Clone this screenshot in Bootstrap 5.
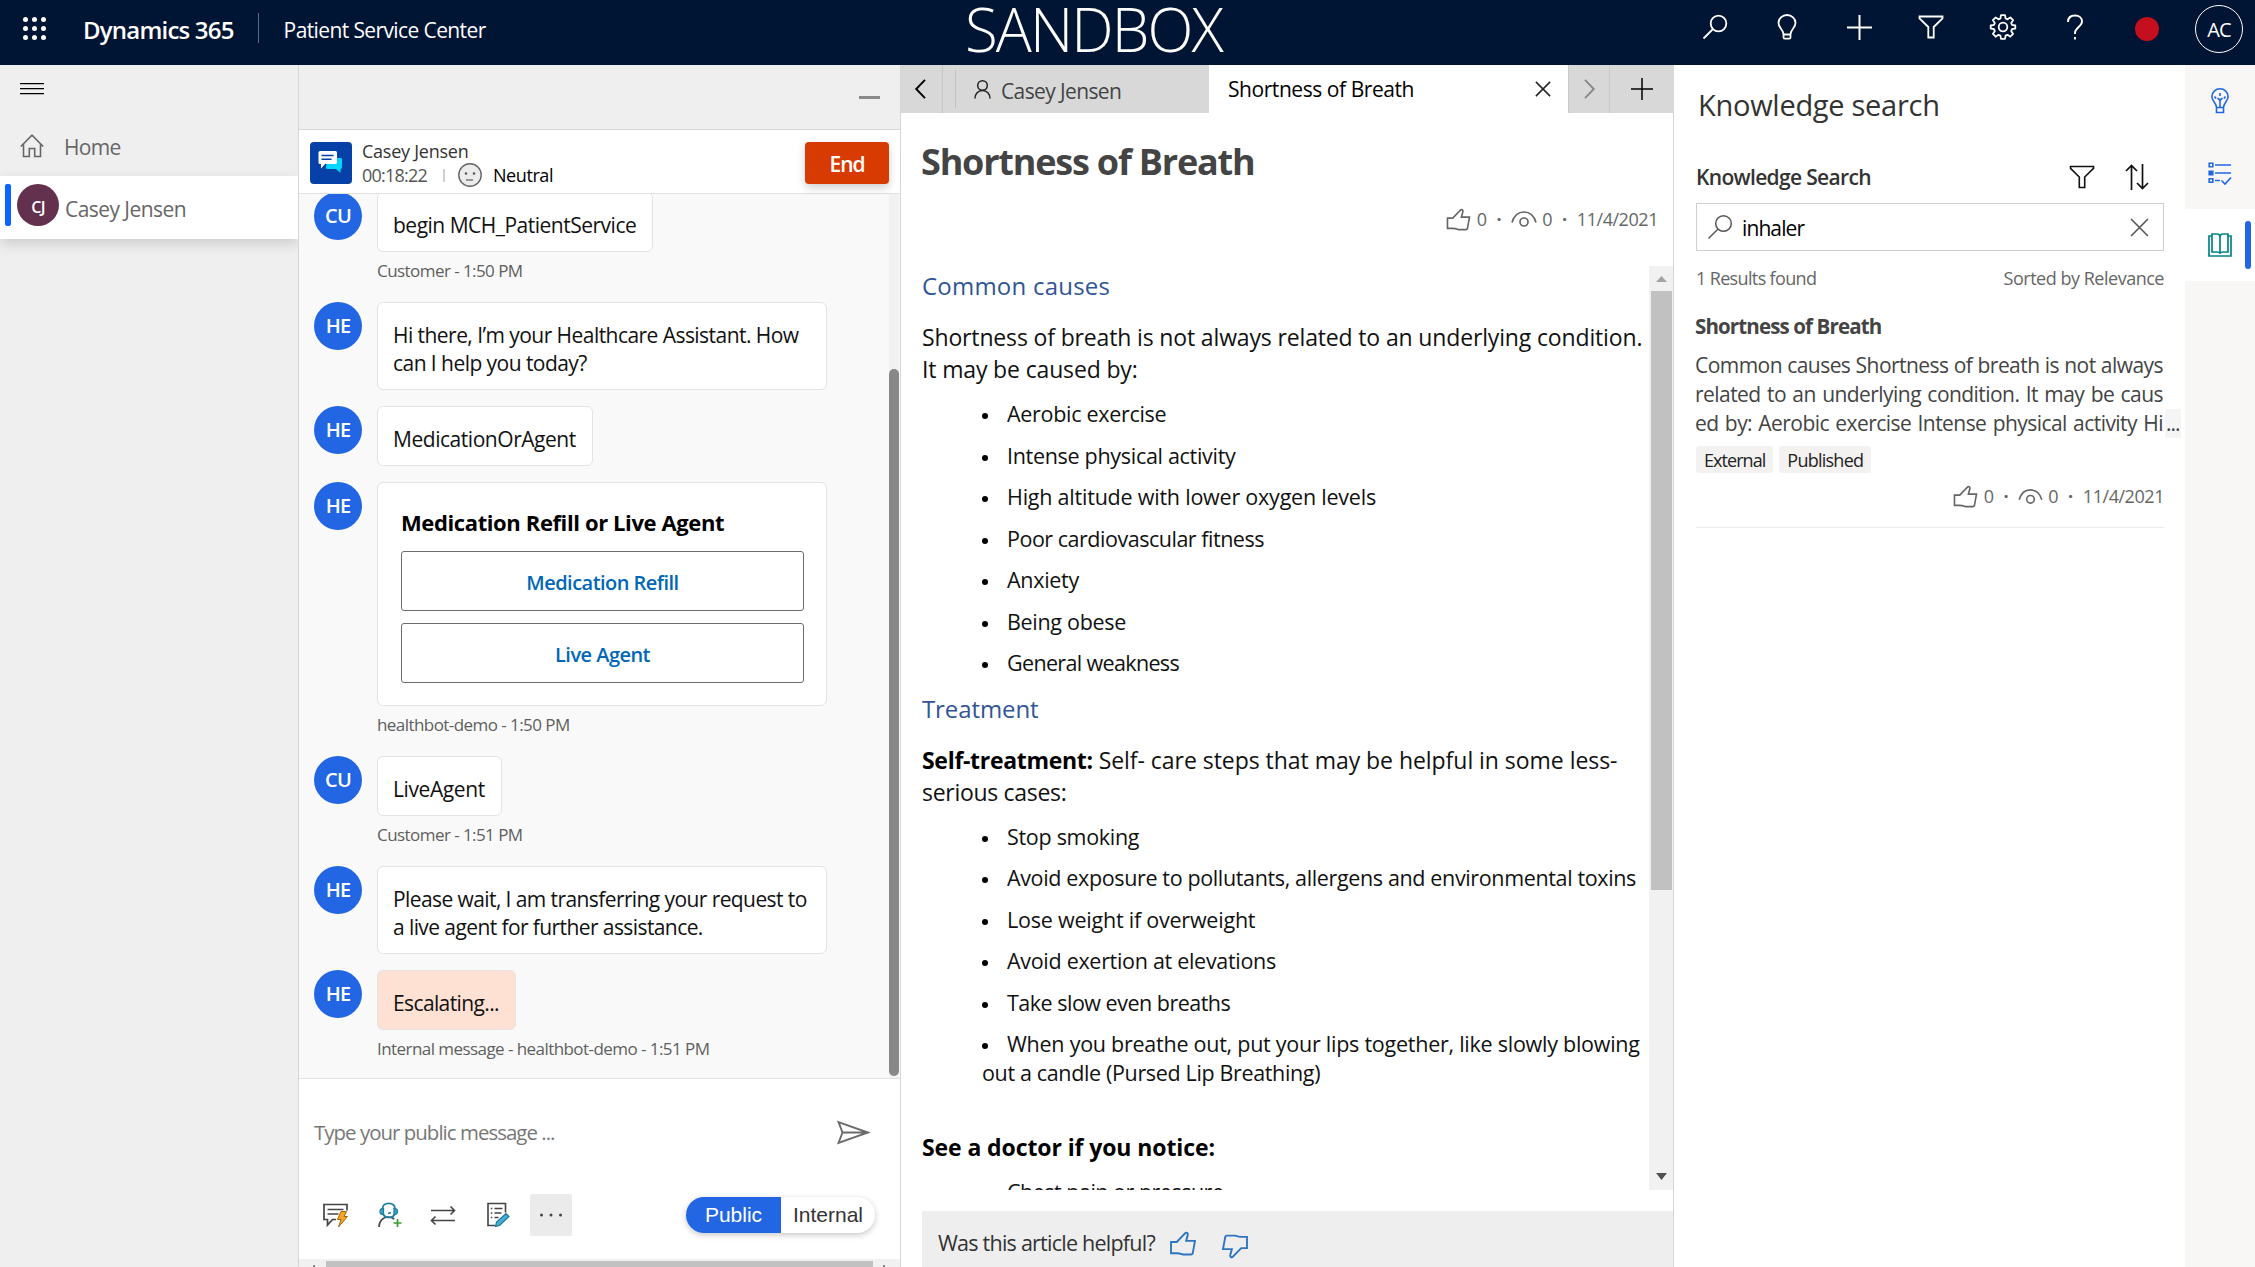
<!DOCTYPE html>
<html lang="en">
<head>
<meta charset="utf-8">
<title>Patient Service Center</title>
<link href="https://cdn.jsdelivr.net/npm/bootstrap@5.3.0/dist/css/bootstrap.min.css" rel="stylesheet">
<script src="https://cdn.jsdelivr.net/npm/bootstrap@5.3.0/dist/js/bootstrap.bundle.min.js"></script>
<style>
body{font-family:"Open Sans","Noto Sans",sans-serif;font-size:21px;line-height:28px;letter-spacing:-.55px;color:#111;width:2255px;height:1267px;overflow:hidden;background:#fff;white-space:nowrap}
svg{display:block;flex:none;fill:none;stroke:currentColor;overflow:visible}
/* top bar */
.topbar{height:65px;background:#001433;color:#fff;display:grid;grid-template-columns:965px 1fr 576px;line-height:60px}
.brand{font-size:24px;font-weight:600;letter-spacing:-.8px;margin-left:36px}
.brand-sep{width:1px;height:30px;background:#5b6982;margin:13px 0 0 24px}
.app-name{margin-left:25px;letter-spacing:-.61px}
.sandbox{font-size:60px;font-weight:300;letter-spacing:-1.9px;line-height:58px}
.tool{width:72px;height:54px}
.rec{width:24px;height:24px;background:#c50f1f;margin-top:4px}
.me{width:48px;height:48px;border:1.5px solid #fff;font-size:20px;line-height:48px;margin-top:4px;letter-spacing:-.8px}
/* left navigation */
.work{height:1202px}
.sidenav{width:298px;background:#efefef;color:#666}
.burger{padding:18px 0 0 20px;height:50px;color:#000}
.home-row{height:61px;padding:0 0 0 20px}
.session{height:63px;background:#fff;box-shadow:0 5px 12px rgba(0,0,0,.14);padding:8px 0 0 5px}
.session-bar{width:6px;height:42px;border-radius:2px;background:#0b66ff}
.session-av{width:42px;height:42px;background:#63304d;color:#fff;font-size:16px;font-weight:600;margin:0 6px 0 6px;padding-top:3px;letter-spacing:-.6px}
/* conversation */
.chat{width:602px;border-left:1px solid #d6d6d6;background:#fff}
.chat-band{height:65px;background:#efefef;border-bottom:1px solid #d6d6d6}
.mini{width:21px;height:3px;background:#8a8a8a;margin:31px 20px 0 0}
.chat-head{height:64px;border-bottom:1px solid #e1e1e1;padding:12px 11px 0 11px}
.chan{width:42px;height:42px;border-radius:4px;background:#0641a8}
.who{font-size:18px;line-height:24px;margin:-3px 0 0 10px;color:#333;letter-spacing:-.25px}
.timer{letter-spacing:-.78px;color:#555}
.end-btn{width:84px;height:42px;background:#d83b01;color:#fff;font-weight:600;border-radius:4px;letter-spacing:-1px;box-shadow:0 4px 9px rgba(0,0,0,.18);line-height:44px}
.stream{height:884px;background:#f9f9f9;overflow:hidden}
.msgs{width:590px;padding-left:15px;margin-top:-2px}
.msg{gap:15px;margin-bottom:16px}
.av{width:48px;height:48px;flex:none;background:#2266e3;color:#fff;font-weight:600;font-size:20px;letter-spacing:-.8px}
.bubble{background:#fff;border:1px solid #e3e3e3;border-radius:6px;padding:18px 16px 12px 15px;width:fit-content;line-height:28px}
.wide{width:450px}
.stamp{height:34px;line-height:37px;font-size:17px;color:#5f5f5f;letter-spacing:-.56px}
.med-card{padding:24px 22px 22px 23px}
.med-title{font-size:22px;font-weight:700;line-height:30px;margin-bottom:14px;letter-spacing:-.39px;color:#000}
.choice{height:60px;border:1px solid #6b6b6b;border-radius:3px;color:#0067b8;font-size:20px;font-weight:600;line-height:61px;letter-spacing:-.53px}
.vtrack{width:10px;background:#f1f1f1;margin-right:1px;padding-top:175px}
.vthumb{height:707px;background:#888;border-radius:5px}
.composer{height:189px;border-top:1px solid #e1e1e1}
.ph{color:#777;font-size:20.4px;letter-spacing:-.95px}
.tools{padding:0 25px 0 24px;height:42px;margin-top:48px}
.more{width:42px;height:42px;background:#ebebeb;border-radius:2px}
.toggle{font-family:"Liberation Sans",Arial,sans-serif;font-size:21px;letter-spacing:0;width:189px;height:36px;border-radius:18px;background:#fff;overflow:hidden;box-shadow:0 2px 6px rgba(0,0,0,.22);line-height:36px;color:#333}
.toggle-on{width:95px;background:#2266e3;color:#fff}
.hbar{height:8px;background:#f1f1f1}
.hthumb{height:6px;background:#c1c1c1;width:547px}
.tick{width:2px;height:2px;background:#8a8a8a}
/* article */
.article{width:774px;border-left:1px solid #d6d6d6;border-right:1px solid #d6d6d6}
.tabs{height:48px;background:#d8d8d8;margin-right:-1px;line-height:52px;letter-spacing:-.62px;color:#444}
.tab-back{width:42px;border-right:1px solid #c6c6c6}
.tab-div{width:1px;height:38px;background:#c0c0c0;margin:5px 0 0 12px}
.tab-on{width:359px;background:#fff;color:#000;padding:0 17px 0 19px;font-weight:500;letter-spacing:-.44px}
.tab-next{width:42px;border-right:1px solid #c9c9c9;border-left:1px solid #c9c9c9;color:#888}
.art-title{font-size:36px;font-weight:700;letter-spacing:-1.2px;color:#444;margin:24px 0 0 20px;line-height:50px}
.meta{font-size:18px;letter-spacing:-.45px;color:#666;line-height:24px}
.scroller{height:924px;overflow:hidden}
.doc{width:748px;padding:1px 0 0 21px;font-size:21.5px;line-height:29px;letter-spacing:-.3px;color:#111}
.doc h2{font-size:24px;line-height:38px;color:#2f5597;letter-spacing:.22px;margin:0;font-weight:400}
.doc p{font-size:23px;line-height:32px;margin:16px 0 14px;letter-spacing:-.15px}
.doc p b{color:#000;letter-spacing:-.3px}
.doc ul{list-style:none;margin:0 0 12px 60px;padding:0}
.doc li{margin-bottom:12.5px}
.dot{display:inline-block;width:25px}
.dot::before{content:"";display:block;width:6px;height:6px;border-radius:50%;background:#000;margin-bottom:3px}
.sb{width:24px;background:#f1f1f1}
.sb-thumb{width:21px;height:599px;background:#c1c1c1;margin:0 auto}
.helpful{height:56px;margin:21px 0 0 21px;background:#eee;padding:5px 0 0 16px;color:#333;letter-spacing:-.76px;font-size:21.5px}
/* knowledge panel */
.know{width:511px;padding:0 21px 0 22px;color:#333}
.know-title{font-size:29px;line-height:40px;letter-spacing:-.28px;margin:20px 0 0 2px}
.know-sub{font-weight:600;letter-spacing:-.67px;height:34px;margin-top:35px}
.search{height:48px;border:1px solid #cfcfcf;margin-top:9px;padding:0 14px 0 10px;color:#000;letter-spacing:-.9px}
.small-row{font-size:18px;line-height:24px;color:#666;margin-top:15px;letter-spacing:-.64px}
.res-title{font-size:20.5px;font-weight:700;color:#444;letter-spacing:-.87px;margin:22px 0 0 -1px}
.snip{line-height:29px;color:#444;margin:11px 0 0 -1px;height:86px}
.snip>div{width:468px;text-align:justify;text-align-last:justify}
.snip .over{width:484px;display:flex}
.over>span:first-child{width:468px;flex:none;text-align-last:justify}
.dots{background:#f5f5f5;margin-left:2px;padding:0 1px;letter-spacing:-1px}
.tagx{background:#f3f2f1;border-radius:3px;height:27px;font-size:18px;line-height:28px;padding:0 8px;color:#222}
.rule{height:1px;background:#ebebeb;margin-top:19px}
.rail{width:70px;background:#f8f7f6;color:#2266e3}
.rail-cell{height:72px}
.rail-on{background:#fff;color:#038387}
.rail-bar{width:6px;height:48px;border-radius:3px;background:#2266e3;top:12px;right:4px}
</style>
</head>
<body>
<svg width="0" height="0" class="position-absolute">
 <symbol id="mag" viewBox="0 0 26 26"><circle cx="16.5" cy="9.5" r="7.8"/><path d="M11 15 1.5 24.5"/></symbol>
 <symbol id="funnel" viewBox="0 0 26 26"><path d="M1.5 2.5h23v1.8L15.700 13v10.500h-5.400V13L1.500 4.300z"/></symbol>
 <symbol id="thumb" viewBox="0 0 26 24"><path d="M1.500 10.500H7L15.500 1.800c1.500-.6 2.500.6 2 2.400L16 9.500h8.500L22.300 21.500q-.4 1-1.500 1h-8q-3.500-1.200-6.300-1.200h-5z"/></symbol>
 <symbol id="eye" viewBox="0 0 26 18"><path d="M1 12.500C3 5.500 7.500 2 13 2s10 3.500 12 10.500"/><circle cx="13" cy="12" r="4"/></symbol>
 <symbol id="cross" viewBox="0 0 18 18"><path d="M1 1l16 16M17 1 1 17"/></symbol>
</svg>

<header class="topbar">
 <div class="d-flex">
  <svg width="24" height="24" viewBox="0 0 24 24" style="fill:#fff;stroke:none;margin:17px 0 0 23px"><g><circle cx="2.500" cy="2.500" r="2.500"/><circle cx="11.500" cy="2.500" r="2.500"/><circle cx="20.500" cy="2.500" r="2.500"/><circle cx="2.500" cy="11.500" r="2.500"/><circle cx="11.500" cy="11.500" r="2.500"/><circle cx="20.500" cy="11.500" r="2.500"/><circle cx="2.500" cy="20.500" r="2.500"/><circle cx="11.500" cy="20.500" r="2.500"/><circle cx="20.500" cy="20.500" r="2.500"/></g></svg>
  <div class="brand">Dynamics 365</div><div class="brand-sep"></div><div class="app-name">Patient Service Center</div>
 </div>
 <div class="sandbox">SANDBOX</div>
 <div class="d-flex">
  <div class="tool d-flex align-items-center justify-content-center"><svg width="26" height="26" stroke-width="1.800"><use href="#mag"/></svg></div>
  <div class="tool d-flex align-items-center justify-content-center"><svg width="20" height="26" viewBox="0 0 20 26" stroke-width="1.800"><path d="M6.500 20.500c0-5-5-6.500-5-11.500a8.500 8 0 0 1 17 0c0 5-5 6.500-5 11.500zM6.500 20.500v3q0 1.200 1.200 1.200h4.600q1.200 0 1.200-1.200v-3"/></svg></div>
  <div class="tool d-flex align-items-center justify-content-center"><svg width="25" height="25" viewBox="0 0 25 25" stroke-width="2"><path d="M12.500 0v25M0 12.500h25"/></svg></div>
  <div class="tool d-flex align-items-center justify-content-center"><svg width="26" height="26" stroke-width="1.800"><use href="#funnel"/></svg></div>
  <div class="tool d-flex align-items-center justify-content-center"><svg width="26" height="26" viewBox="0 0 26 26" stroke-width="1.800" stroke-linejoin="round"><circle cx="13" cy="13" r="4.300"/><path d="M11 1.200h4l.6 3.300 1.900.8 2.800-1.900 2.800 2.800-1.900 2.800.8 1.900 3.300.6v3l-3.300.7-.8 1.900 1.900 2.800-2.800 2.800-2.800-1.900-1.900.8-.6 3.300h-4l-.6-3.300-1.900-.8-2.800 1.900-2.800-2.800 1.900-2.800-.8-1.900-3.300-.7v-3l3.300-.6.8-1.900-1.900-2.800 2.800-2.800 2.800 1.900 1.900-.8z"/></svg></div>
  <div class="tool d-flex align-items-center justify-content-center"><svg width="16" height="26" viewBox="0 0 16 26" stroke-width="1.900"><path d="M1 8c0-4 2.700-6.500 7-6.500s7 2.500 7 6c0 5-7 6-7 11.500v1"/><path d="M8 23v2.500"/></svg></div>
  <div class="tool d-flex align-items-center justify-content-center"><div class="rec rounded-circle"></div></div>
  <div class="tool d-flex align-items-center justify-content-center"><div class="me rounded-circle text-center">AC</div></div>
 </div>
</header>

<main class="work d-flex">
 <nav class="sidenav">
  <div class="burger"><svg width="24" height="12" viewBox="0 0 24 12" stroke-width="1.200"><path d="M0 .6h24M0 5.600h24M0 10.600h24"/></svg></div>
  <div class="home-row d-flex align-items-center"><svg width="24" height="24" viewBox="0 0 24 24" stroke-width="1.600"><path d="M.8 12.500 12 1.200l11.200 11.300M3.500 10v12.500h5.800v-8h5.400v8h5.800V10"/></svg><span style="margin:2px 0 0 20px;letter-spacing:-.7px">Home</span></div>
  <div class="session d-flex"><div class="session-bar"></div><div class="session-av rounded-circle d-flex align-items-center justify-content-center">CJ</div><span style="margin-top:11px">Casey Jensen</span></div>
 </nav>

 <section class="chat">
  <div class="chat-band d-flex justify-content-end"><div class="mini"></div></div>
  <div class="chat-head d-flex">
   <div class="chan d-flex align-items-center justify-content-center"><svg width="26" height="24" viewBox="0 0 26 24" style="stroke:none"><path fill="#00d8ff" d="M9 7h13.500Q24 7 24 8.500v8q0 1.500-1.500 1.500v4L18 18H9.500Q8 18 8 16.500z"/><path fill="#fff" d="M2 0h15.500Q19 0 19 1.500v10q0 1.500-1.500 1.500H7l-4 4.500V13H2Q.5 13 .5 11.500v-10Q.5 0 2 0z"/><path stroke="#0641a8" stroke-width="1.500" d="M3.500 4.500h12M3.500 8.200h10"/></svg></div>
   <div class="who">Casey Jensen
    <div class="d-flex"><span class="timer">00:18:22</span><span style="width:2px;height:13px;background:#d0d0d0;margin:6px 13px 0 16px"></span><svg width="24" height="24" viewBox="0 0 24 24" color="#666" stroke-width="1.400"><circle cx="12" cy="12" r="11.200" fill="#ececec"/><path d="M8 17h7" stroke-width="1.300"/><circle cx="8" cy="10.500" r="1" fill="#555" stroke="#555" stroke-width=".6"/><circle cx="16" cy="10.500" r="1" fill="#555" stroke="#555" stroke-width=".6"/></svg><span style="margin-left:11px;color:#000;font-weight:500;letter-spacing:-.43px">Neutral</span></div>
   </div>
   <div class="end-btn ms-auto text-center">End</div>
  </div>
  <div class="stream d-flex">
   <div class="msgs">
    <div class="msg d-flex"><div class="av rounded-circle d-flex align-items-center justify-content-center">CU</div><div><div class="bubble" style="letter-spacing:-.5px">begin MCH_PatientService</div><div class="stamp">Customer - 1:50 PM</div></div></div>
    <div class="msg d-flex"><div class="av rounded-circle d-flex align-items-center justify-content-center">HE</div><div class="bubble wide">Hi there, I’m your Healthcare Assistant. How<br>can I help you today?</div></div>
    <div class="msg d-flex"><div class="av rounded-circle d-flex align-items-center justify-content-center">HE</div><div class="bubble" style="letter-spacing:-.46px">MedicationOrAgent</div></div>
    <div class="msg d-flex"><div class="av rounded-circle d-flex align-items-center justify-content-center">HE</div><div><div class="bubble wide med-card"><div class="med-title">Medication Refill or Live Agent</div><div class="choice text-center">Medication Refill</div><div class="choice text-center" style="margin-top:12px">Live Agent</div></div><div class="stamp">healthbot-demo - 1:50 PM</div></div></div>
    <div class="msg d-flex"><div class="av rounded-circle d-flex align-items-center justify-content-center">CU</div><div><div class="bubble" style="letter-spacing:-.4px">LiveAgent</div><div class="stamp">Customer - 1:51 PM</div></div></div>
    <div class="msg d-flex"><div class="av rounded-circle d-flex align-items-center justify-content-center">HE</div><div class="bubble wide" style="letter-spacing:-.59px">Please wait, I am transferring your request to<br>a live agent for further assistance.</div></div>
    <div class="msg d-flex"><div class="av rounded-circle d-flex align-items-center justify-content-center">HE</div><div><div class="bubble" style="background:#ffe1d4;letter-spacing:-.62px">Escalating...</div><div class="stamp">Internal message - healthbot-demo - 1:51 PM</div></div></div>
   </div>
   <div class="vtrack ms-auto"><div class="vthumb"></div></div>
  </div>
  <div class="composer">
   <div class="d-flex align-items-center justify-content-between" style="padding:0 30px 0 15px;height:28px;margin-top:39px"><span class="ph">Type your public message ...</span><svg width="33" height="23" viewBox="0 0 33 23" color="#6b6b6b" stroke-width="1.900"><path d="M1.500 1.200 31 11.500 1.500 21.800l4-10.300zM5.500 11.500H31"/></svg></div>
   <div class="tools d-flex align-items-center">
    <svg width="26" height="26" viewBox="0 0 26 26" color="#444" stroke-width="1.700"><path d="M13 17.500H9.500L4.500 23v-5.500H1v-15h23v6M4.500 7.500h16M4.500 12h11"/><path d="M18 9.500h5.500l-2.500 5h3.500L15.500 25l2.500-7.500h-3.500z" fill="#f5a623" stroke="#a8660a" stroke-width="1"/></svg>
    <svg style="margin-left:29px" width="26" height="26" viewBox="0 0 26 26" stroke-width="1.700"><path stroke="#444" d="M1 25c0-6 4-10 9.500-10 3 0 4.500 1 5.800 2.200"/><path stroke="#1b7fa0" fill="#41a5c5" stroke-width="1.300" d="M5.500 6.500v6c-3 0-3.500-1-3.500-3s.5-3 3.500-3zM16 6.500v6c3 0 3.500-1 3.500-3s-.5-3-3.500-3z"/><path stroke="#1b7fa0" d="M4.500 7C4.500 3 7 1.300 10.700 1.300S17 3 17 7M16.500 12c-.5 2.500-3 3.500-5.800 3.500S6 14 5 12M13 10.500l-3 1"/><path stroke="#3a9b35" d="M19.500 17v8M15.500 21h8"/></svg>
    <svg style="margin-left:26px" width="26" height="20" viewBox="0 0 26 20" color="#444" stroke-width="1.600"><path d="M1 5.500h23M20.500 1.500l4 4-4 4M25 15.500H2M5.500 11.500l-4 4 4 4"/></svg>
    <svg style="margin-left:31px" width="24" height="26" viewBox="0 0 24 26" color="#444" stroke-width="1.600"><path d="M8 23.500H1V1.500h17.500v9M7.500 6.500h8M7.500 11h7M7.500 15.500h4M3.800 6.500h1.500M3.800 11h1.500M3.800 15.500h1.500"/><path d="m8.500 24.500 1-4.500L19 11.500l3 3L12.500 23.500z" fill="#41b0d5" stroke="#1b7090" stroke-width="1.100"/></svg>
    <div class="more d-flex align-items-center justify-content-center" style="margin-left:19px"><svg width="24" height="4" viewBox="0 0 24 4" style="fill:#444;stroke:none"><circle cx="2.500" cy="2" r="1.500"/><circle cx="12" cy="2" r="1.500"/><circle cx="21.500" cy="2" r="1.500"/></svg></div>
    <div class="toggle d-flex ms-auto text-center"><div class="toggle-on">Public</div><div class="flex-fill">Internal</div></div>
   </div>
   <div class="hbar d-flex align-items-end justify-content-between" style="margin-top:23px;padding:0 15px 0 14px"><div class="tick"></div><div class="hthumb"></div><div class="tick"></div></div>
  </div>
 </section>

 <section class="article">
  <div class="tabs d-flex">
   <div class="tab-back d-flex align-items-center justify-content-center" style="color:#000;padding-right:2px"><svg width="11" height="20" viewBox="0 0 11 20" stroke-width="1.900"><path d="M10 .8 1.200 10l8.800 9.200"/></svg></div>
   <div class="tab-div"></div>
   <svg width="17" height="19" viewBox="0 0 17 19" style="margin:15px 0 0 18px;color:#222" stroke-width="1.500"><circle cx="8.500" cy="5.500" r="4.800"/><path d="M1 18.500c0-4.500 3-8 7.500-8s7.500 3.500 7.500 8"/></svg>
   <span style="margin-left:10px">Casey Jensen</span>
   <div class="tab-on d-flex align-items-center justify-content-between ms-auto">Shortness of Breath<svg width="16" height="16" color="#222" stroke-width="1.700"><use href="#cross"/></svg></div>
   <div class="tab-next d-flex align-items-center justify-content-center"><svg width="11" height="20" viewBox="0 0 11 20" stroke-width="1.900"><path d="M1 .8 9.800 10 1 19.200"/></svg></div>
   <div class="d-flex align-items-center justify-content-center" style="width:64px;color:#000"><svg width="22" height="22" viewBox="0 0 22 22" stroke-width="1.500"><path d="M11 0v22M0 11h22"/></svg></div>
  </div>
  <div class="art-title">Shortness of Breath</div>
  <div class="meta d-flex align-items-center justify-content-end" style="margin:20px 15px 0 0"><svg width="25" height="23" stroke-width="1.700"><use href="#thumb"/></svg><span style="margin-left:6px">0</span><span style="margin:0 10px 0 10px;font-weight:700">·</span><svg width="26" height="18" stroke-width="1.700"><use href="#eye"/></svg><span style="margin-left:5px">0</span><span style="margin:0 10px 0 10px;font-weight:700">·</span>11/4/2021</div>
  <div class="d-flex scroller" style="margin-top:35px">
   <div class="doc">
    <h2>Common causes</h2>
    <p>Shortness of breath is not always related to an underlying condition.<br>It may be caused by:</p>
    <ul><li><span class="dot"></span>Aerobic exercise</li><li><span class="dot"></span>Intense physical activity</li><li style="letter-spacing:-.22px"><span class="dot"></span>High altitude with lower oxygen levels</li><li style="letter-spacing:-.48px"><span class="dot"></span>Poor cardiovascular fitness</li><li><span class="dot"></span>Anxiety</li><li><span class="dot"></span>Being obese</li><li style="letter-spacing:-.65px"><span class="dot"></span>General weakness</li></ul>
    <h2 style="letter-spacing:-.1px">Treatment</h2>
    <p><b>Self-treatment:</b> <span style="letter-spacing:-.04px">Self- care steps that may be helpful in some less-</span><br><span style="letter-spacing:-.3px">serious cases:</span></p>
    <ul><li><span class="dot"></span>Stop smoking</li><li style="letter-spacing:-.36px"><span class="dot"></span>Avoid exposure to pollutants, allergens and environmental toxins</li><li style="letter-spacing:-.22px"><span class="dot"></span>Lose weight if overweight</li><li><span class="dot"></span>Avoid exertion at elevations</li><li style="letter-spacing:-.5px"><span class="dot"></span>Take slow even breaths</li><li style="letter-spacing:-.25px"><span class="dot"></span>When you breathe out, put your lips together, like slowly blowing<br><span style="letter-spacing:-.35px">out a candle (Pursed Lip Breathing)</span></li></ul>
    <p style="margin-top:44px"><b style="letter-spacing:-.1px">See a doctor if you notice:</b></p>
    <ul><li style="letter-spacing:-.5px"><span class="dot"></span>Chest pain or pressure</li></ul>
   </div>
   <div class="sb d-flex flex-column"><svg width="11" height="6" viewBox="0 0 11 6" style="margin:10px 0 9px 7px;fill:#a3a3a3;stroke:none"><path d="M0 6 5.500 0 11 6z"/></svg><div class="sb-thumb"></div><svg width="11" height="7" viewBox="0 0 11 7" style="margin:auto 0 10px 7px;fill:#505050;stroke:none"><path d="M0 0h11L5.500 7z"/></svg></div>
  </div>
  <div class="helpful d-flex"><span style="line-height:53px;height:48px">Was this article helpful?</span><svg width="28" height="25" viewBox="0 0 26 24" style="margin:15px 0 0 14px;color:#2f74c0" stroke-width="1.800"><use href="#thumb"/></svg><svg width="28" height="25" style="margin:18px 0 0 24px;color:#2f74c0;transform:rotate(180deg)" stroke-width="1.800"><use href="#thumb"/></svg></div>
 </section>

 <aside class="know">
  <div class="know-title">Knowledge search</div>
  <div class="know-sub d-flex align-items-center"><span>Knowledge Search</span><svg class="ms-auto" width="26" height="26" color="#111" stroke-width="1.600"><use href="#funnel"/></svg><svg width="24" height="26" viewBox="0 0 24 26" color="#111" stroke-width="1.700" style="margin:0 15px 0 30px"><path d="M6.500 26V1.500M1 7l5.500-5.500L12 7M17.500 0v24.500M12 19l5.500 5.500L23 19"/></svg></div>
  <div class="search d-flex align-items-center"><svg width="26" height="26" color="#555" stroke-width="1.500"><use href="#mag"/></svg><span style="margin:2px 0 0 9px">inhaler</span><svg class="ms-auto" width="19" height="19" color="#555" stroke-width="1.500"><use href="#cross"/></svg></div>
  <div class="small-row d-flex justify-content-between"><span>1 Results found</span><span style="letter-spacing:-.48px">Sorted by Relevance</span></div>
  <div class="res-title">Shortness of Breath</div>
  <div class="snip"><div>Common causes Shortness of breath is not always</div><div>related to an underlying condition. It may be caus</div><div class="over"><span>ed by: Aerobic exercise Intense physical activity Hi</span><span class="dots">...</span></div></div>
  <div class="d-flex" style="margin-top:9px;gap:6px"><span class="tagx" style="letter-spacing:-.95px">External</span><span class="tagx" style="letter-spacing:-.75px">Published</span></div>
  <div class="meta d-flex align-items-center justify-content-end" style="margin-top:11px"><svg width="25" height="23" stroke-width="1.700"><use href="#thumb"/></svg><span style="margin-left:6px">0</span><span style="margin:0 10px 0 10px;font-weight:700">·</span><svg width="25" height="17" stroke-width="1.700"><use href="#eye"/></svg><span style="margin-left:5px">0</span><span style="margin:0 10px 0 10px;font-weight:700">·</span>11/4/2021</div>
  <div class="rule"></div>
 </aside>

 <div class="rail">
  <div class="rail-cell d-flex align-items-center justify-content-center"><svg width="18" height="26" viewBox="0 0 18 26" stroke-width="1.600"><path d="M5.500 19.500c0-4.500-4.600-6-4.600-11a8.100 7.700 0 0 1 16.200 0c0 5-4.600 6.500-4.600 11zM5.500 19.500v5h7v-5M9 19.500v-9M9 8V5M5 10.500 3.500 8.500M13 10.500l1.500-2M9 12.500 6.500 10M9 12.500l2.500-2.500"/></svg></div>
  <div class="rail-cell d-flex align-items-center justify-content-center"><svg width="24" height="24" viewBox="0 0 24 24" stroke-width="1.600"><path d="M1.200 2.200h3.600v3.600H1.200zM7 4h16M7 12h16M1.200 17.700h3.600v3.600H1.200zM7 19.500h5M13.500 19.500l3.500 3.500 6-6.500"/><path fill="currentColor" d="M1.200 10.200h3.600v3.600H1.200z"/></svg></div>
  <div class="rail-cell rail-on position-relative d-flex align-items-center justify-content-center"><svg width="24" height="24" viewBox="0 0 24 24" stroke-width="1.700"><path d="M4 3H1v20h22V3h-3M4 1h5q3 0 3 3v16.500Q11.500 19 9 19H4zM20 1h-5q-3 0-3 3v16.500q.5-1.500 3-1.500h5z"/></svg><div class="rail-bar position-absolute"></div></div>
 </div>
</main>
</body>
</html>
